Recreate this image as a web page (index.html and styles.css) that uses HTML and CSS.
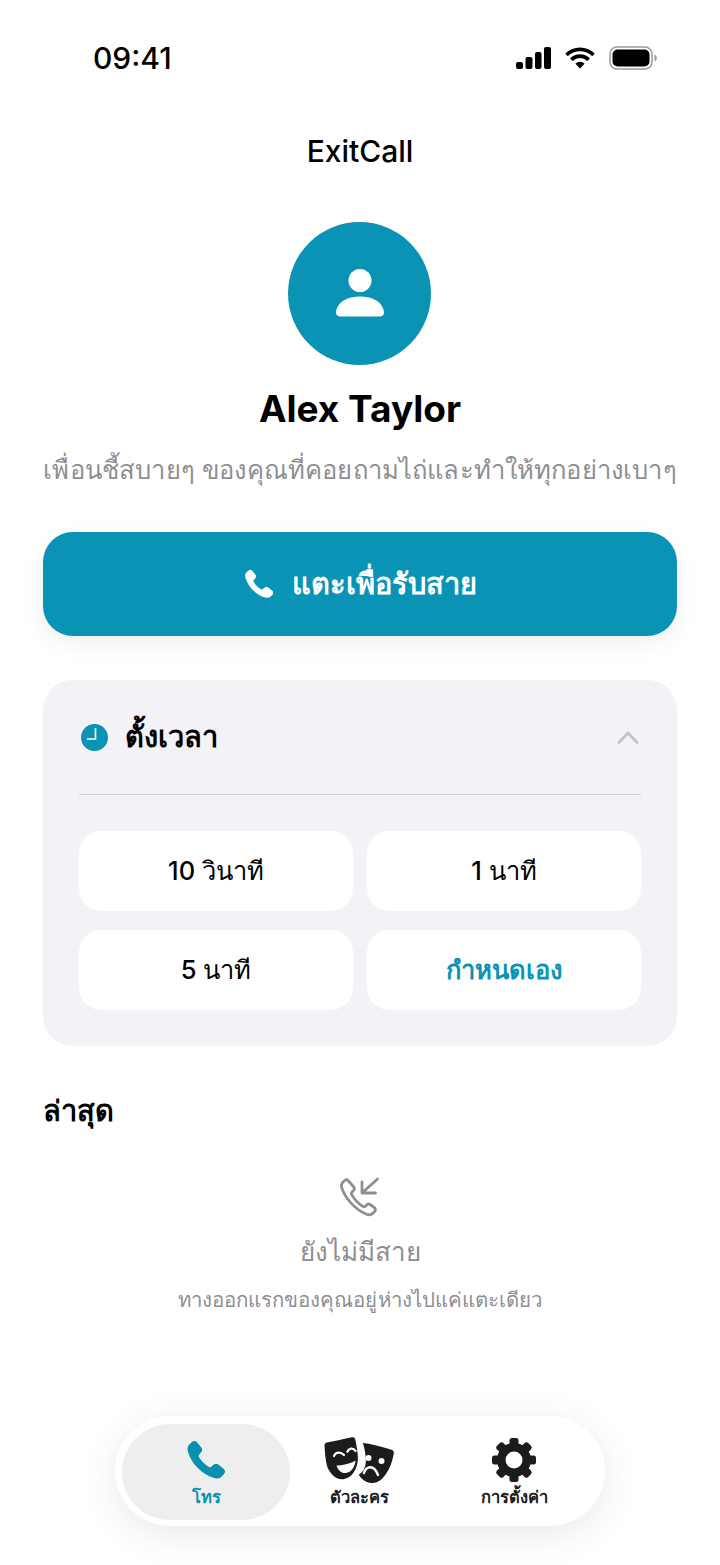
FILE: index.html
```html
<!DOCTYPE html>
<html>
  <head>
    <meta charset='utf-8'>
    <meta name="viewport" content="width=device-width,initial-scale=1.0">
    <title>ExitCall</title>
    <link rel="stylesheet" href="styles.css">
  </head>
  <body>
    <div class="status-bar">
      <span class="time">09:41</span>
      <div class="status-icons">
        <svg width="35" height="22" viewBox="0 0 35 22"><rect x="0" y="15" width="7" height="7" rx="2"/><rect x="9.5" y="10" width="7" height="12" rx="2"/><rect x="19" y="5" width="6.500" height="17" rx="2"/><rect x="28" y="0" width="7" height="22" rx="2"/></svg>
        <svg width="30" height="22" viewBox="0 0 30 22"><path d="M15 21.500l-4.600-4.800a6.500 6.500 0 0 1 9.200 0z"/><path d="M7.700 14a10.400 10.400 0 0 1 14.600 0l2.600-2.700a14.200 14.200 0 0 0-19.800 0z"/><path d="M2.800 9.200a17.300 17.300 0 0 1 24.400 0l2.500-2.700a21 21 0 0 0-29.400 0z"/></svg>
        <svg width="48" height="24" viewBox="0 0 48 24"><rect x="1" y="1" width="42" height="22" rx="7" fill="none" stroke="#9a9a9a" stroke-width="1.500"/><rect x="3.500" y="3.500" width="37" height="17" rx="5"/><path d="M45.500 8.500c1.500.6 2.300 2 2.300 3.500s-.8 2.900-2.300 3.500z" fill="#9a9a9a"/></svg>
      </div>
    </div>

    <h1 class="app-title">ExitCall</h1>

    <section class="profile">
      <div class="avatar">
        <svg width="48" height="52" viewBox="0 0 48 52" fill="#fff"><circle cx="24" cy="12.500" r="11.500"/><path d="M0 43.500C1.500 34 11 28.500 24 28.500S46.500 34 48 43.500c.5 3-1.500 5-4.500 5h-39c-3 0-5-2-4.500-5z"/></svg>
      </div>
      <h2 class="name">Alex Taylor</h2>
      <p class="bio">เพื่อนชี้สบายๆ ของคุณที่คอยถามไถ่และทำให้ทุกอย่างเบาๆ</p>
    </section>

    <button class="answer">
      <svg width="30" height="30" viewBox="0 0 24 24" fill="#fff"><path d="M6.600 1.300c-.8-.9-2-.9-2.900-.2L2.400 2.200C.9 3.500.6 5.300 1.200 7.200c2.300 7.300 8.300 13.300 15.600 15.600 1.900.6 3.700.3 5-1.200l1.100-1.300c.7-.9.700-2.100-.2-2.900l-3.300-2.700c-.8-.7-1.900-.7-2.700 0l-1.600 1.300c-.5.400-1.100.4-1.600.1-2.300-1.500-4.200-3.400-5.700-5.700-.3-.5-.3-1.100.1-1.600l1.300-1.600c.7-.8.700-1.900 0-2.700z"/></svg>
      <span>แตะเพื่อรับสาย</span>
    </button>

    <section class="timer">
      <div class="timer-head">
        <svg class="clock" width="27" height="27" viewBox="0 0 27 27"><circle cx="13.500" cy="13.500" r="13.500" fill="#0a93b5"/><path d="M14.500 4v11H6" fill="none" stroke="#fff" stroke-width="1.600"/></svg>
        <span class="timer-title">ตั้งเวลา</span>
        <svg class="chevron" width="22" height="13" viewBox="0 0 22 13"><path d="M2 11.500L11 2l9 9.500" fill="none" stroke="#c4c4c8" stroke-width="2.800" stroke-linecap="round" stroke-linejoin="round"/></svg>
      </div>
      <div class="timer-grid">
        <div class="option">10 วินาที</div>
        <div class="option">1 นาที</div>
        <div class="option">5 นาที</div>
        <div class="option custom">กำหนดเอง</div>
      </div>
    </section>

    <h3 class="recent">ล่าสุด</h3>
    <section class="empty">
      <svg width="40" height="40" viewBox="0 0 40 40" fill="none" stroke="#8e8e93" stroke-width="2.800" stroke-linecap="round" stroke-linejoin="round"><path d="M8 3.500c-1-.9-2.200-.8-3.200 0L3 5C1.400 6.500 1.100 8.500 1.800 10.800c3.400 10.800 13.800 21.800 24.700 26.500 2.300 .9 4.500 .7 6.300-.9l1.800-1.900c1.200-1.200 1.100-2.800-.2-3.800l-4.100-3.100c-1.100-.8-2.300-.7-3.300.1l-1.600 1.400c-.8.700-1.800.8-2.800.2-4.100-2.800-8.300-7.200-10.900-11.700-.5-.9-.4-1.800.4-2.600l1.500-1.600c.9-1 .9-2.300.2-3.400z"/><path d="M37.500 2L22 16M22 5v11h13.500"/></svg>
      <p class="empty-title">ยังไม่มีสาย</p>
      <p class="empty-sub">ทางออกแรกของคุณอยู่ห่างไปแค่แตะเดียว</p>
    </section>

    <nav class="tabs">
      <a class="tab active">
        <svg width="40" height="40" viewBox="0 0 24 24" fill="#0a8fb0"><path d="M6.600 1.300c-.8-.9-2-.9-2.900-.2L2.400 2.200C.9 3.500.6 5.300 1.200 7.200c2.300 7.300 8.300 13.300 15.600 15.600 1.900.6 3.700.3 5-1.200l1.100-1.300c.7-.9.700-2.100-.2-2.900l-3.300-2.700c-.8-.7-1.900-.7-2.700 0l-1.600 1.300c-.5.400-1.100.4-1.600.1-2.300-1.500-4.200-3.400-5.700-5.700-.3-.5-.3-1.100.1-1.600l1.300-1.600c.7-.8.700-1.900 0-2.700z"/></svg>
        <span>โทร</span>
      </a>
      <a class="tab">
        <svg class="masks" width="70" height="46" viewBox="0 0 70 46">
          <path d="M3 5.500C11 4 20 2 28 .3c1.800-.4 2.800.4 3.200 2 1.400 6 3 15 2.600 20.700-.6 9-5.600 17.500-13.500 19-8 1.500-14.500-5-17.300-13C1.500 23 .8 15 .5 8.500c0-1.600 1-2.700 2.500-3z" fill="#1c1c1e"/>
          <path d="M37.500 5.800c9.500 1 20 3.700 30 7 1.700.6 2.600 1.800 2.300 3.500-1.300 8-3.700 15-8 21-4.500 6.400-10 9.700-16.500 8.500-4.300-.8-8-3.700-10.500-8 4.500-3 6.500-7 7-12.500.4-5.500-1-13-2.600-18.300-.2-.6 0-1.200-2-1.200z" fill="#1c1c1e"/>
          <path d="M10 19c1.500-3.500 6-5 10-1M23.300 14.700c1.500-3.500 5.500-4.500 8.400-.7" fill="none" stroke="#fff" stroke-width="2.200" stroke-linecap="round"/>
          <path d="M12.500 28.500C18 28.500 26 27 31.500 23.500 31 30 27 35.500 22 36 17 36.500 14 33 12.500 28.500z" fill="#fff"/>
          <circle cx="44.500" cy="21" r="3" fill="#fff"/><circle cx="57.500" cy="24" r="3" fill="#fff"/>
          <path d="M40 36c2-7 10-9 14 2" fill="none" stroke="#fff" stroke-width="2.400" stroke-linecap="round"/>
        </svg>
        <span>ตัวละคร</span>
      </a>
      <a class="tab settings">
        <svg width="44" height="44" viewBox="0 0 44 44">
          <g fill="#1c1c1e">
            <circle cx="22" cy="22" r="17"/>
            <rect x="17.500" y="0" width="9" height="12" rx="2.500"/>
            <rect x="17.500" y="0" width="9" height="12" rx="2.500" transform="rotate(45 22 22)"/>
            <rect x="17.500" y="0" width="9" height="12" rx="2.500" transform="rotate(90 22 22)"/>
            <rect x="17.500" y="0" width="9" height="12" rx="2.500" transform="rotate(135 22 22)"/>
            <rect x="17.500" y="0" width="9" height="12" rx="2.500" transform="rotate(180 22 22)"/>
            <rect x="17.500" y="0" width="9" height="12" rx="2.500" transform="rotate(225 22 22)"/>
            <rect x="17.500" y="0" width="9" height="12" rx="2.500" transform="rotate(270 22 22)"/>
            <rect x="17.500" y="0" width="9" height="12" rx="2.500" transform="rotate(315 22 22)"/>
          </g>
          <circle cx="22" cy="22" r="8.500" fill="#fff"/>
        </svg>
        <span>การตั้งค่า</span>
      </a>
    </nav>
  </body>
</html>
```

FILE: styles.css
```css
html, body, h1, h2, h3, p {
    margin: 0;
    padding: 0;
}
body {
    background-color: #fff;
    color: #000;
    font-family: Inter, "Noto Sans", "Liberation Sans", sans-serif;
    width: 720px;
    height: 1565px;
    overflow: hidden;
    padding: 0 43px;
    box-sizing: border-box;
}
.status-bar {
    height: 116px;
    padding: 0 20px 0 50px;
    display: flex;
    align-items: center;
    justify-content: space-between;
}
.time {
    font-size: 30px;
    font-weight: 500;
}
.status-icons {
    display: flex;
    align-items: center;
    gap: 14px;
}
.app-title {
    font-size: 30px;
    font-weight: 500;
    line-height: 70px;
    text-align: center;
}
.profile {
    padding-top: 36px;
    display: flex;
    flex-direction: column;
    align-items: center;
}
.avatar {
    width: 143px;
    height: 143px;
    margin-left: -1px;
    border-radius: 50%;
    background-color: #0a93b5;
    display: flex;
    align-items: center;
    justify-content: center;
}
.name {
    font-size: 37px;
    font-weight: 700;
    line-height: 46px;
    margin-top: 21px;
}
.bio {
    font-size: 25.600px;
    letter-spacing: .15px;
    line-height: 40px;
    margin-top: 18px;
    color: #8e8e93;
    white-space: nowrap;
}
.answer {
    width: 634px;
    height: 104px;
    margin-top: 42px;
    border: 0;
    border-radius: 30px;
    background-color: #0a93b5;
    color: #fff;
    font-family: inherit;
    font-size: 29px;
    font-weight: 700;
    display: flex;
    align-items: center;
    justify-content: center;
    gap: 18px;
    box-shadow: 0 8px 24px rgba(0, 0, 0, .06);
}
.timer {
    margin-top: 44px;
    height: 366px;
    box-sizing: border-box;
    padding: 0 36px;
    border-radius: 30px;
    background-color: #f2f2f7;
}
.timer-head {
    height: 114px;
    display: flex;
    align-items: center;
    border-bottom: 1px solid #d1d1d6;
    padding: 0 2px;
}
.timer-title {
    font-size: 29px;
    font-weight: 700;
    margin-left: 17px;
}
.chevron {
    margin-left: auto;
}
.timer-grid {
    margin-top: 36px;
    display: grid;
    grid-template-columns: 1fr 1fr;
    column-gap: 14px;
    row-gap: 19px;
}
.option {
    height: 80px;
    border-radius: 22px;
    background-color: #fff;
    font-size: 25.500px;
    font-weight: 500;
    display: flex;
    align-items: center;
    justify-content: center;
}
.custom {
    color: #0a93b5;
    font-weight: 700;
}
.recent {
    margin-top: 44px;
    font-size: 29px;
    font-weight: 700;
    line-height: 42px;
}
.empty {
    margin-top: 45px;
    display: flex;
    flex-direction: column;
    align-items: center;
}
.empty-title {
    font-size: 26px;
    line-height: 36px;
    margin-top: 17px;
    color: #8e8e93;
}
.empty-sub {
    font-size: 20.400px;
    letter-spacing: .05px;
    line-height: 32px;
    margin-top: 14px;
    color: #8e8e93;
}
/* floats over the page bottom */
.tabs {
    position: absolute;
    left: 115px;
    top: 1416px;
    width: 490px;
    height: 110px;
    box-sizing: border-box;
    padding: 8px 5px 6px 7px;
    border-radius: 55px;
    background-color: #fff;
    box-shadow: 0 8px 40px rgba(0, 0, 0, .09);
    display: flex;
}
.tab {
    flex: 0 0 138px;
    display: flex;
    flex-direction: column;
    align-items: center;
    justify-content: center;
    gap: 2px;
    padding-top: 4px;
    font-size: 16.500px;
    font-weight: 700;
    color: #1c1c1e;
    border-radius: 48px;
}
.tab svg {
    height: 44px;
}
.tab svg.masks {
    height: 46px;
    margin: -1px 0;
}
.tab.settings {
    flex: 1;
}
.tab.active {
    flex: 0 0 168px;
    background-color: #eeeeee;
    color: #0a8fb0;
}
```
